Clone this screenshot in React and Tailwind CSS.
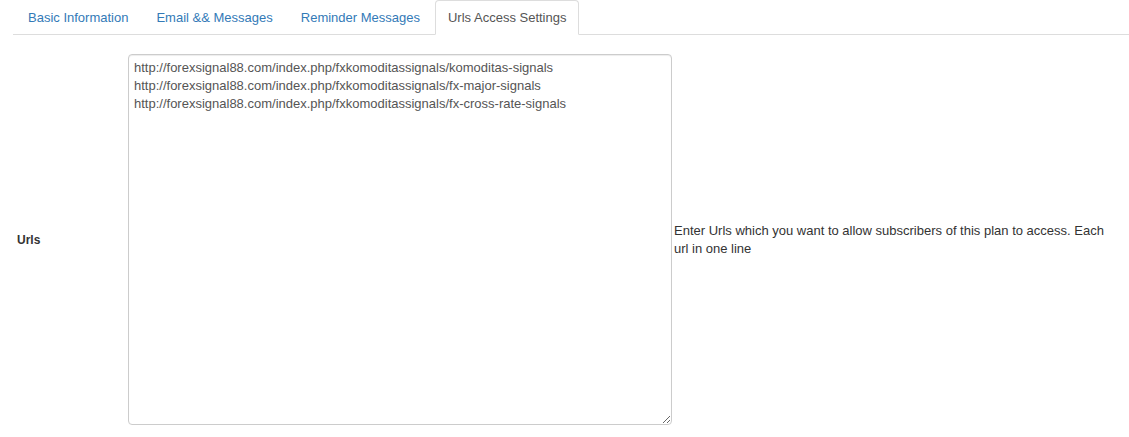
import React from "react";

const tabs = ["Basic Information", "Email && Messages", "Reminder Messages", "Urls Access Settings"];

export default function App() {
  const urls = [
    "http://forexsignal88.com/index.php/fxkomoditassignals/komoditas-signals",
    "http://forexsignal88.com/index.php/fxkomoditassignals/fx-major-signals",
    "http://forexsignal88.com/index.php/fxkomoditassignals/fx-cross-rate-signals",
  ].join("\n");
  return (
    <div className="w-[1129px] h-[437px] bg-white text-[#333] overflow-hidden" style={{ fontFamily: '"Liberation Sans", Arial, sans-serif' }}>
      <div className="pl-[13px]">
        <ul className="flex border-b border-[#ddd] h-[35px] pl-[2px]">
          {tabs.map((t, i) => {
            const active = i === 3;
            return (
              <li key={t} className="mr-[2px] -mb-px">
                {active ? (
                  <span className="block h-[35px] px-[12px] leading-[33px] text-[13px] text-[#555] bg-white border border-[#ddd] border-b-transparent rounded-t-[4px]">
                    {t}
                  </span>
                ) : (
                  <span className="block h-[35px] px-[12px] leading-[33px] text-[13px] text-[#337ab7] border border-transparent">
                    {t}
                  </span>
                )}
              </li>
            );
          })}
        </ul>
        <div className="flex items-center mt-[19px]">
          <div className="w-[115px] pl-[4px] text-[12px] font-bold text-[#333]">Urls</div>
          <textarea
            defaultValue={urls}
            className="w-[544px] h-[371px] border border-[#ccc] rounded-[4px] px-[5px] pt-[4px] pb-[5px] text-[13px] leading-[18px] text-[#555] shadow-[inset_0_1px_1px_rgba(0,0,0,0.075)] outline-none resize-y"
            style={{ fontFamily: '"Liberation Sans", Arial, sans-serif' }}
          />
          <div className="ml-[2px] w-[445px] text-[13px] leading-[18px] text-[#333]">
            Enter Urls which you want to allow subscribers of this plan to access. Each url in one line
          </div>
        </div>
      </div>
    </div>
  );
}
